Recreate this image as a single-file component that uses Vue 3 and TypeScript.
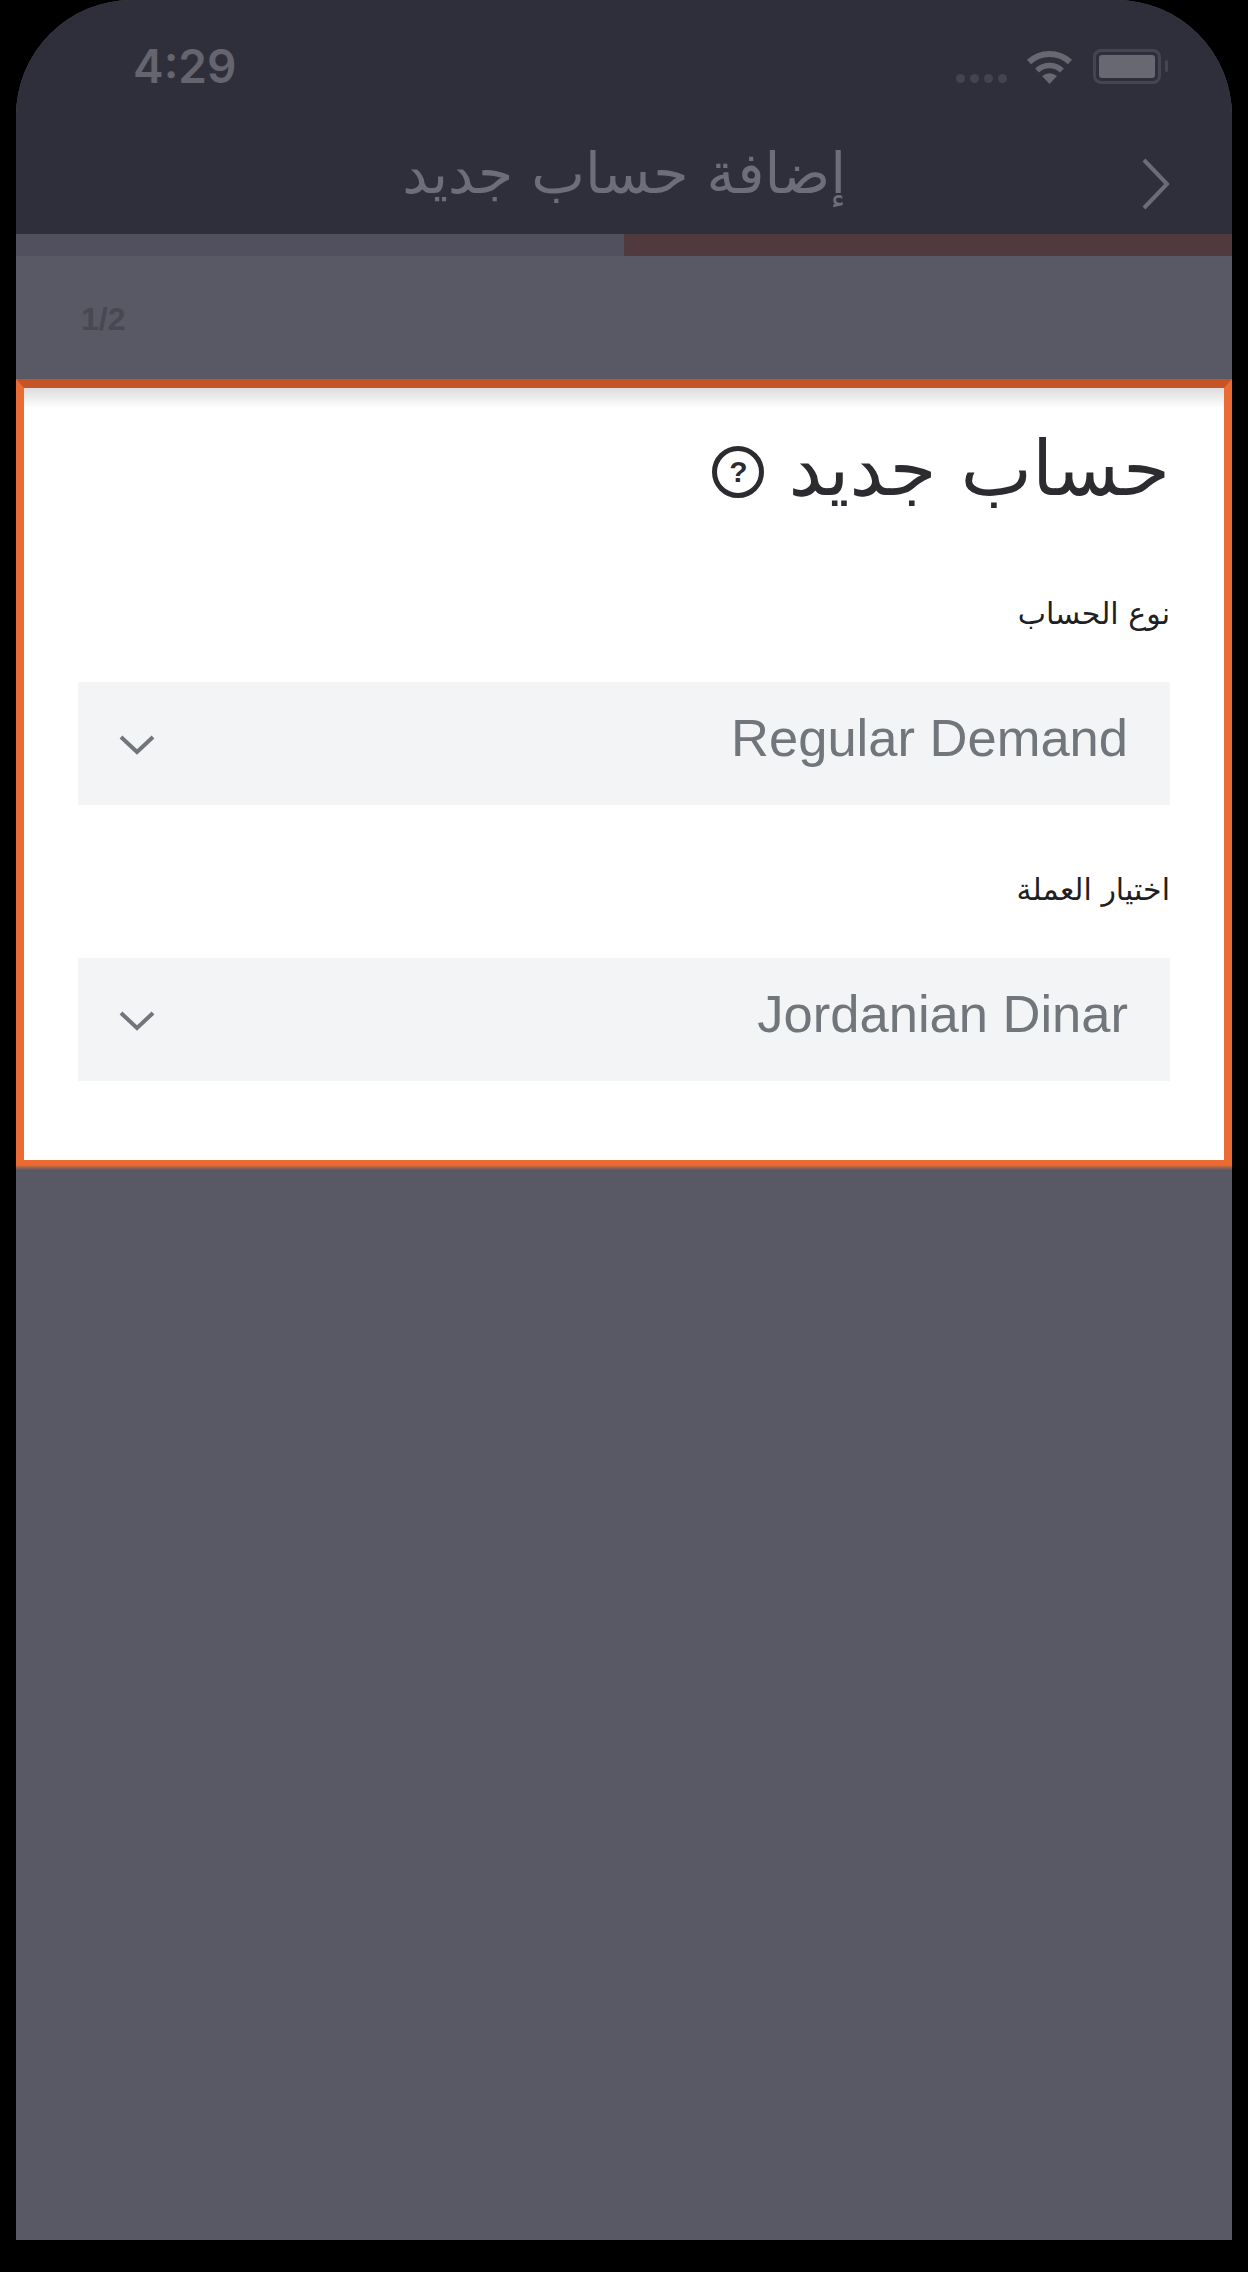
<script setup lang="ts">
interface Field {
  label: string;
  value: string;
}

const fields: Field[] = [
  { label: "نوع الحساب", value: "Regular Demand" },
  { label: "اختيار العملة", value: "Jordanian Dinar" },
];
</script>

<template>
  <div class="page">
    <div class="screen">
      <header class="topbar">
        <div class="status">
          <span class="time">4:29</span>
          <div class="indicators">
            <div class="signal"><i></i><i></i><i></i><i></i></div>
            <svg class="wifi" viewBox="0 0 47 35" width="47" height="35" aria-hidden="true">
              <path d="M3 13 A 30 30 0 0 1 44 13" fill="none" stroke="#686873" stroke-width="6" />
              <path d="M11 21.5 A 18 18 0 0 1 36 21.5" fill="none" stroke="#686873" stroke-width="5.5" />
              <path d="M16 27 Q23.5 21.5 31 27 L23.5 35 Z" fill="#686873" />
            </svg>
            <div class="battery"><span class="level"></span></div>
            <span class="nub"></span>
          </div>
        </div>
        <div class="titlebar">
          <h1 class="page-title" dir="rtl">إضافة حساب جديد</h1>
          <svg class="back" viewBox="0 0 28 52" width="28" height="52" aria-hidden="true">
            <path d="M2 2 L25 26 L2 50" fill="none" stroke="#6c6c78" stroke-width="4" />
          </svg>
        </div>
      </header>

      <div class="progress"><span class="rest"></span><span class="done"></span></div>

      <div class="stepbar"><span class="step">1/2</span></div>

      <section class="card">
        <h2 class="card-title" dir="rtl">
          <span>حساب جديد</span>
          <span class="help">?</span>
        </h2>
        <div v-for="field in fields" :key="field.value" class="field">
          <label class="label" dir="rtl">{{ field.label }}</label>
          <div class="select">
            <svg class="chevron" viewBox="0 0 36 20" width="36" height="20" aria-hidden="true">
              <path d="M2 2 L18 17 L34 2" fill="none" stroke="#72767c" stroke-width="4" />
            </svg>
            <span class="value">{{ field.value }}</span>
          </div>
        </div>
      </section>
    </div>
  </div>
</template>

<style>
html,
body {
  margin: 0;
  background: #000;
}
</style>

<style scoped>
.page {
  box-sizing: border-box;
  width: 1248px;
  height: 2272px;
  padding: 0 16px 32px;
  background: #000;
}

.screen {
  display: flex;
  flex-direction: column;
  height: 2240px;
  overflow: hidden;
  border-radius: 116px 116px 0 0;
  background: #585964;
}

.topbar {
  height: 234px;
  background: #2f2f3c;
}

.status {
  display: flex;
  align-items: center;
  justify-content: space-between;
  height: 132px;
  padding: 0 64px 0 117px;
}

.time {
  font: 600 46px "Inter", "Liberation Sans", sans-serif;
  color: #65656f;
}

.indicators {
  display: flex;
  align-items: center;
}

.signal {
  display: flex;
  gap: 5px;
  margin-right: 19px;
  padding-top: 25px;
}

.signal i {
  width: 9px;
  height: 9px;
  border-radius: 50%;
  background: #44444f;
}

.battery {
  box-sizing: border-box;
  width: 68px;
  height: 35px;
  margin-left: 20px;
  padding: 3px;
  border: 3px solid #454552;
  border-radius: 8px;
}

.level {
  display: block;
  height: 100%;
  border-radius: 3px;
  background: #686873;
}

.nub {
  width: 3px;
  height: 12px;
  margin-left: 4px;
  border-radius: 2px;
  background: #454552;
}

.titlebar {
  display: flex;
  align-items: center;
  justify-content: flex-end;
  height: 102px;
  padding-right: 62px;
}

.page-title {
  margin: 0 296px 20px 0;
  font: 400 57px "DejaVu Sans", sans-serif;
  color: #6e6e7a;
}

.back {
  margin-top: 2px;
}

.progress {
  display: flex;
  height: 22px;
}

.rest,
.done {
  flex: 1;
}

.rest {
  background: #50505f;
}

.done {
  background: #503a3e;
}

.stepbar {
  display: flex;
  align-items: center;
  height: 123px;
  padding-left: 65px;
}

.step {
  margin-top: 4px;
  font: 700 32px "Liberation Sans", sans-serif;
  color: #474852;
}

.card {
  position: relative;
  box-sizing: border-box;
  height: 786px;
  padding: 32px 54px 0 54px;
  border-top: 9px solid #c75427;
  border-right: 8px solid #ea6b34;
  border-bottom: 5px solid #ea6b34;
  border-left: 8px solid #ea6b34;
  background: linear-gradient(#dcdcdc, #fff 20px);
}

.card::after {
  content: "";
  position: absolute;
  top: 100%;
  right: -8px;
  left: -8px;
  height: 5px;
  margin-top: 5px;
  background: linear-gradient(#ea6b34, #585964);
}

.card-title {
  display: flex;
  align-items: center;
  gap: 24px;
  height: 96px;
  margin: 0;
  font: 400 76px "DejaVu Sans", sans-serif;
  color: #2b2b30;
}

.help {
  display: flex;
  align-items: center;
  justify-content: center;
  box-sizing: border-box;
  width: 52px;
  height: 52px;
  margin-top: 8px;
  border: 5px solid #2b2b30;
  border-radius: 50%;
  font: 700 30px "Liberation Sans", sans-serif;
}

.field {
  margin-top: 78px;
}

.field + .field {
  margin-top: 65px;
}

.label {
  display: block;
  height: 88px;
  font: 400 30px/40px "DejaVu Sans", sans-serif;
  color: #1f1f24;
}

.select {
  display: flex;
  align-items: center;
  justify-content: space-between;
  height: 123px;
  padding: 0 42px 0 41px;
  background: #f2f4f6;
}

.chevron {
  margin-top: 2px;
}

.value {
  margin-bottom: 12px;
  font: 400 52.5px "Liberation Sans", sans-serif;
  color: #71757c;
}
</style>
